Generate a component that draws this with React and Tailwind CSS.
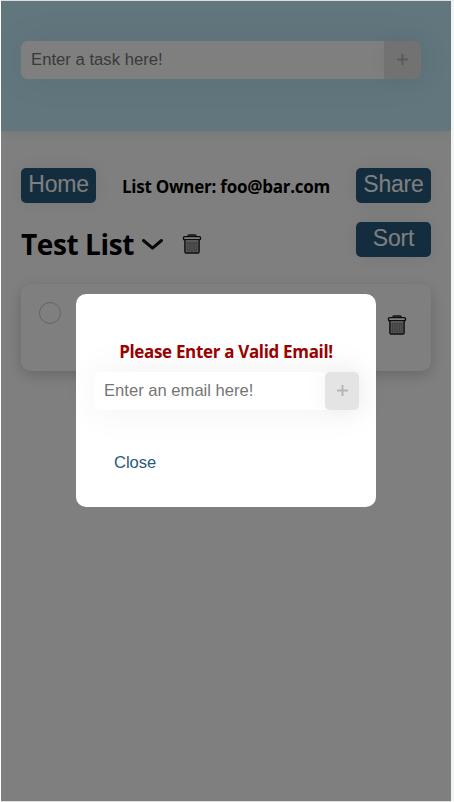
import React from "react";

const heading = "font-['Open_Sans','Noto_Sans',sans-serif] font-bold whitespace-nowrap";

function Trash({ className }) {
  return (
    <svg viewBox="0 0 20 20" className={className} fill="none" stroke="#1c1c1c" strokeWidth="1.4">
      <path d="M6 2.6V1.8Q6 1 7 1H13Q14 1 14 1.8V2.6" />
      <rect x="1.5" y="2.6" width="17" height="3.2" rx="1" />
      <path d="M2.9 5.9V17.8Q2.9 19 4 19H16Q17.1 19 17.1 17.8V5.9" fill="#b0b0b0" />
      <path d="M5.3 8.5h2v8.5h-2zM9 8.5h2v8.5H9zM12.7 8.5h2v8.5h-2z" stroke="#777" strokeWidth="0.9" />
    </svg>
  );
}

function Button({ children }) {
  return (
    <button className="h-[35px] w-[75px] rounded-[5px] bg-[#265a7c] pb-[3px] text-[23px] leading-8 tracking-[-0.2px] text-white shadow-[0_0_20px_rgba(0,0,0,0.08)]">
      {children}
    </button>
  );
}

function Plus() {
  return (
    <svg viewBox="0 0 11 11" className="size-[11px]" stroke="#b5b5b5" strokeWidth="2">
      <path d="M0 5.5H11M5.5 0V11" />
    </svg>
  );
}

export default function App() {
  return (
    <div className="h-[802px] w-[454px] overflow-hidden bg-[#f2f3f3] pr-[3px] font-['Liberation_Sans',Arial,sans-serif]">
      <div className="h-full border-y border-l border-y-[#dedede] border-l-white">
        <div className="relative h-[800px] w-[450px] overflow-hidden bg-white">
          <header className="h-[130px] bg-[#c4ecfc] px-5 pt-10 shadow-[0_0_12px_rgba(0,0,0,0.1)]">
            <form className="flex h-[38px] w-[400px] rounded-[7px] shadow-[0_0_40px_rgba(0,0,0,0.06)]">
              <input
                className="w-[363px] rounded-l-[7px] bg-white pl-[10px] text-[16.7px] placeholder:text-[#757575]"
                placeholder="Enter a task here!"
              />
              <button className="flex w-[37px] items-center justify-center rounded-r-[7px] bg-[#e4e4e4] pb-[2px] shadow-[0_0_25px_rgba(0,0,0,0.06)]">
                <Plus />
              </button>
            </form>
          </header>
          <main className="px-5 pt-[37px]">
            <div className="flex h-[35px] items-center justify-between">
              <Button>Home</Button>
              <p className={`${heading} pt-[3px] text-[17px] tracking-[-0.25px] text-black`}>
                List Owner: foo@bar.com
              </p>
              <Button>Share</Button>
            </div>
            <div className="mt-[19px] flex h-[35px]">
              <div className="flex h-[44px] flex-1 items-center">
                <h1 className={`${heading} w-[121px] text-[28px] tracking-[-0.4px] text-black`}>Test List</h1>
                <svg viewBox="0 0 21 13" className="h-[13px] w-[21px]" fill="none" stroke="#111" strokeWidth="3" strokeLinecap="round" strokeLinejoin="round">
                  <path d="M1.5 2.5L10.5 10.2L19.5 2.5" />
                </svg>
                <Trash className="ml-[19px] size-5" />
              </div>
              <Button>Sort</Button>
            </div>
            <div className="mt-[27px] flex h-[87px] justify-between rounded-[10px] bg-white pt-[18px] pr-6 pl-[18px] shadow-[0_4px_15px_rgba(0,0,0,0.2)]">
              <span className="size-[22px] rounded-full border border-[#c8c8c8]" />
              <Trash className="mt-[13px] size-5" />
            </div>
          </main>
          <div className="absolute inset-0 bg-black/50 pt-[293.4px] pl-[75px]">
            <section className="h-[213px] w-[300px] rounded-[10px] bg-white px-[18px] pt-[46px]">
              <p className={`${heading} h-[32px] text-center text-[17px] leading-6 tracking-[-0.33px] text-[#990000]`}>
                Please Enter a Valid Email!
              </p>
              <form className="flex h-[38px] w-[265px] rounded-[7px] shadow-[0_0_40px_rgba(0,0,0,0.06)]">
                <input
                  className="w-[231px] rounded-l-[7px] bg-white pt-px pl-[10px] text-[16.6px] placeholder:text-[#757575]"
                  placeholder="Enter an email here!"
                />
                <button className="flex w-[34px] items-center justify-center rounded-[5px] bg-[#e4e4e4] pb-px shadow-[0_0_25px_rgba(0,0,0,0.06)]">
                  <Plus />
                </button>
              </form>
              <button className="mt-[39.5px] ml-5 text-[16.5px] leading-6 text-[#265a7c]">Close</button>
            </section>
          </div>
        </div>
      </div>
    </div>
  );
}
